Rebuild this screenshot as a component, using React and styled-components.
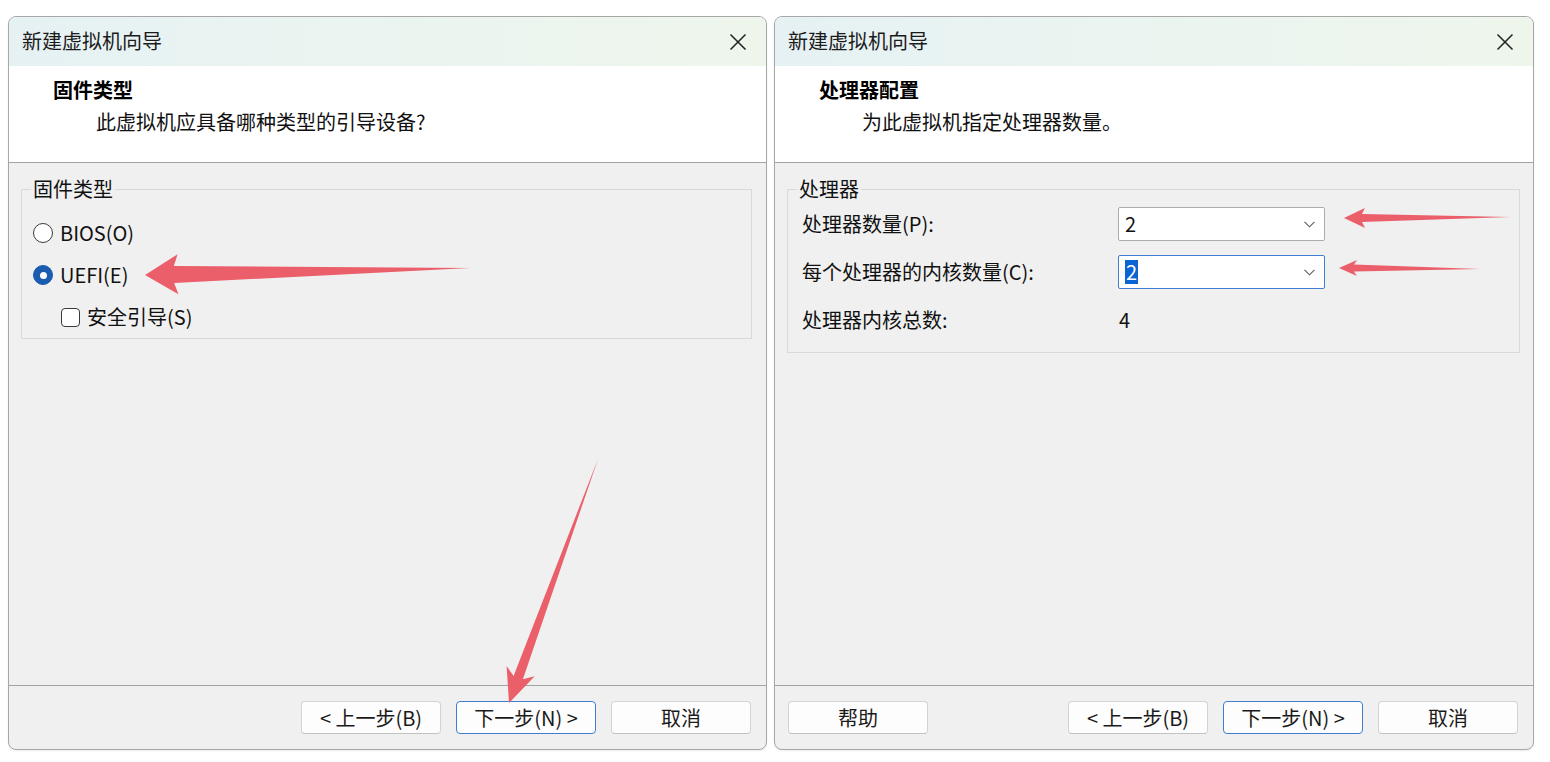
import React from "react";
import styled, { createGlobalStyle, css } from "styled-components";

const GlobalStyle = createGlobalStyle`
  html, body { margin: 0; padding: 0; background: #ffffff; }
  body {
    font-family: "Noto Sans CJK SC", "Noto Sans", sans-serif;
    color: #111;
  }
  * { box-sizing: border-box; }
`;

const Page = styled.div`
  position: relative;
  width: 1550px;
  height: 762px;
  display: flex;
  gap: 7px;
  padding: 16px 0 0 8px;
  overflow: hidden;
`;

const Dialog = styled.div`
  width: ${(p) => p.$w}px;
  height: 734px;
  display: flex;
  flex-direction: column;
  border: 1px solid #a7a7a7;
  border-radius: 8px;
  overflow: hidden;
  background: #f0f0f0;
  box-shadow: 0 1px 2px rgba(0, 0, 0, 0.08);
`;

const TitleBar = styled.div`
  height: 49px;
  flex: none;
  display: flex;
  align-items: center;
  justify-content: space-between;
  padding: 0 19px 0 13px;
  background: linear-gradient(90deg, #e6f1f4 0%, #eaf4f0 45%, #eef6ec 100%);
`;

const TitleText = styled.div`
  font-size: 20px;
  line-height: 24px;
  color: #1b1b1b;
  margin-top: -2px;
`;

const CloseIcon = () => (
  <svg width="18" height="18" viewBox="0 0 18 18">
    <path d="M1.5 1.5 L16.5 16.5 M16.5 1.5 L1.5 16.5" stroke="#222" strokeWidth="1.5" fill="none" />
  </svg>
);

const Header = styled.div`
  height: 97px;
  flex: none;
  background: #ffffff;
  border-bottom: 1px solid #a3a3a3;
  padding: 11px 0 0 44px;
`;

const HeaderTitle = styled.div`
  font-size: 20px;
  font-weight: 700;
  line-height: 26px;
  color: #000;
`;

const HeaderSub = styled.div`
  font-size: 20px;
  line-height: 26px;
  margin: 6px 0 0 43px;
  color: #111;
`;

const Body = styled.div`
  flex: 1;
  padding: 26px ${(p) => p.$pr}px 0 12px;
`;

const Group = styled.div`
  border: 1px solid #d9d9d9;
  padding: 0 12px ${(p) => p.$pb}px 11px;
`;

const Legend = styled.div`
  width: fit-content;
  margin: -12px 0 0 -2px;
  padding: 0 2px;
  font-size: 20px;
  line-height: 22px;
  background: #f0f0f0;
  color: #111;
`;

const Options = styled.div`
  padding-top: 12px;
  display: flex;
  flex-direction: column;
`;

const OptionRow = styled.label`
  height: 42px;
  display: flex;
  align-items: center;
  gap: 7px;
  padding-left: ${(p) => p.$indent || 0}px;
  font-size: 20px;
  line-height: 24px;
`;

const Radio = styled.span`
  width: 20px;
  height: 20px;
  border-radius: 50%;
  flex: none;
  display: flex;
  align-items: center;
  justify-content: center;
  border: 1px solid #3a3a3a;
  background: #fff;
  ${(p) =>
    p.$checked &&
    css`
      border-color: #1a5cb0;
      background: #1a5cb0;
      &::after {
        content: "";
        width: 7px;
        height: 7px;
        border-radius: 50%;
        background: #fff;
      }
    `}
`;

const Check = styled.span`
  width: 19px;
  height: 19px;
  flex: none;
  border: 1px solid #3a3a3a;
  border-radius: 4px;
  background: #fff;
`;

const Rows = styled.div`
  display: grid;
  grid-template-columns: 316px 207px;
  grid-auto-rows: 48px;
  align-items: center;
  padding-left: 3px;
`;

const FieldLabel = styled.div`
  font-size: 20px;
  line-height: 24px;
  color: #111;
`;

const Value = styled.div`
  font-size: 20px;
  line-height: 24px;
  padding-left: 1px;
`;

const Combo = styled.div`
  height: 34px;
  display: flex;
  align-items: center;
  justify-content: space-between;
  padding: 0 9px 0 6px;
  background: #fff;
  border: 1px solid ${(p) => (p.$focus ? "#3f7fcf" : "#acacac")};
  border-radius: 2px;
  font-size: 20px;
  line-height: 24px;
`;

const Selected = styled.span`
  background: #0a64d2;
  color: #fff;
  padding: 0 1px;
`;

const Chevron = () => (
  <svg width="11" height="7" viewBox="0 0 11 7">
    <path d="M0.5 0.8 L5.5 5.8 L10.5 0.8" stroke="#5a5a5a" strokeWidth="1.1" fill="none" />
  </svg>
);

const Footer = styled.div`
  height: 64px;
  flex: none;
  border-top: 1px solid #a3a3a3;
  display: flex;
  align-items: flex-start;
  gap: 15px;
  padding: 15px ${(p) => p.$pr}px 0 13px;
  justify-content: flex-end;
`;

const Button = styled.button`
  width: 140px;
  height: 33px;
  border-radius: 4px;
  background: #fdfdfd;
  border: 1px solid ${(p) => (p.$default ? "#3d7fce" : "#d3d3d3")};
  border-bottom-color: ${(p) => (p.$default ? "#3d7fce" : "#c2c2c2")};
  font-family: inherit;
  font-size: 20px;
  line-height: 24px;
  color: #1a1a1a;
  padding: 0;
  ${(p) => p.$left && css`margin-right: auto;`}
`;

const Overlay = styled.svg`
  position: absolute;
  left: 0;
  top: 0;
  pointer-events: none;
`;

function arrowPoints([tx, ty], [px, py], headLen, headHalf, neckHalf, neckLen) {
  const dx = tx - px;
  const dy = ty - py;
  const len = Math.hypot(dx, dy);
  const ux = dx / len;
  const uy = dy / len;
  const nx = -uy;
  const ny = ux;
  const hb = [px + ux * headLen, py + uy * headLen];
  const nb = [px + ux * neckLen, py + uy * neckLen];
  const pts = [
    [tx, ty],
    [nb[0] + nx * neckHalf, nb[1] + ny * neckHalf],
    [hb[0] + nx * headHalf, hb[1] + ny * headHalf],
    [px, py],
    [hb[0] - nx * headHalf, hb[1] - ny * headHalf],
    [nb[0] - nx * neckHalf, nb[1] - ny * neckHalf],
  ];
  return pts.map((p) => p.map((v) => v.toFixed(1)).join(",")).join(" ");
}

const ARROWS = [
  { tail: [470, 268], tip: [145, 275], head: 33, half: 20, neck: 8.5, neckLen: 29 },
  { tail: [598, 459], tip: [509, 703], head: 34, half: 15, neck: 5, neckLen: 27 },
  { tail: [1510, 217], tip: [1344, 218], head: 21, half: 10, neck: 4, neckLen: 18 },
  { tail: [1480, 269], tip: [1339, 268], head: 18, half: 8, neck: 3.5, neckLen: 15 },
];

export default function App() {
  return (
    <>
      <GlobalStyle />
      <Page>
        <Dialog $w={759}>
          <TitleBar>
            <TitleText>新建虚拟机向导</TitleText>
            <CloseIcon />
          </TitleBar>
          <Header>
            <HeaderTitle>固件类型</HeaderTitle>
            <HeaderSub>此虚拟机应具备哪种类型的引导设备?</HeaderSub>
          </Header>
          <Body $pr={14}>
            <Group $pb={0}>
              <Legend>固件类型</Legend>
              <Options>
                <OptionRow>
                  <Radio />
                  BIOS(O)
                </OptionRow>
                <OptionRow>
                  <Radio $checked />
                  UEFI(E)
                </OptionRow>
                <OptionRow $indent={28}>
                  <Check />
                  安全引导(S)
                </OptionRow>
              </Options>
            </Group>
          </Body>
          <Footer $pr={15}>
            <Button>&lt; 上一步(B)</Button>
            <Button $default>下一步(N) &gt;</Button>
            <Button>取消</Button>
          </Footer>
        </Dialog>

        <Dialog $w={760}>
          <TitleBar>
            <TitleText>新建虚拟机向导</TitleText>
            <CloseIcon />
          </TitleBar>
          <Header>
            <HeaderTitle>处理器配置</HeaderTitle>
            <HeaderSub>为此虚拟机指定处理器数量。</HeaderSub>
          </Header>
          <Body $pr={13}>
            <Group $pb={8}>
              <Legend>处理器</Legend>
              <Rows>
                <FieldLabel>处理器数量(P):</FieldLabel>
                <Combo>
                  <span>2</span>
                  <Chevron />
                </Combo>
                <FieldLabel>每个处理器的内核数量(C):</FieldLabel>
                <Combo $focus>
                  <Selected>2</Selected>
                  <Chevron />
                </Combo>
                <FieldLabel>处理器内核总数:</FieldLabel>
                <Value>4</Value>
              </Rows>
            </Group>
          </Body>
          <Footer $pr={15}>
            <Button $left>帮助</Button>
            <Button>&lt; 上一步(B)</Button>
            <Button $default>下一步(N) &gt;</Button>
            <Button>取消</Button>
          </Footer>
        </Dialog>

        <Overlay width="1550" height="762" viewBox="0 0 1550 762">
          {ARROWS.map((a, i) => (
            <polygon
              key={i}
              points={arrowPoints(a.tail, a.tip, a.head, a.half, a.neck, a.neckLen)}
              fill="#ea5f6a"
            />
          ))}
        </Overlay>
      </Page>
    </>
  );
}
